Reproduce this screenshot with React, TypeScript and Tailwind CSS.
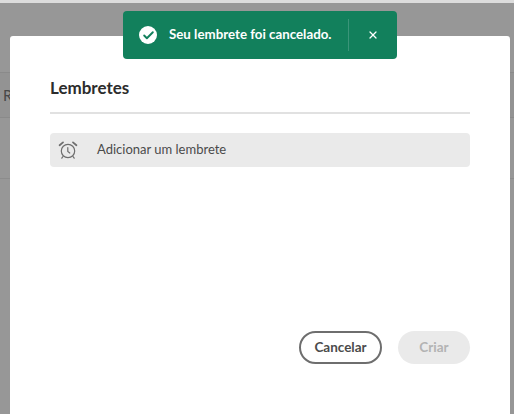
import { Check, X } from "lucide-react";

function ClockIcon() {
    return (
        <svg width="20" height="20" viewBox="0 0 20 20" fill="none" stroke="#6e6e6e" strokeWidth="1.2" strokeLinecap="round">
            <circle cx="10" cy="11" r="6.7" />
            <path d="M9.8 7.5v4l2 1.5" />
            <path d="M1.6 5.2 5 2.4" strokeWidth="1.8" />
            <path d="M18.4 5.2 15 2.4" strokeWidth="1.8" />
            <path d="M5 16.5 3.8 18.2M15 16.5l1.2 1.7" />
        </svg>
    );
}

export default function App() {
    return (
        <div className="relative h-[414px] w-[514px] overflow-hidden bg-[#979797] font-['Lato',sans-serif]">
            {/* page behind the dialog */}
            <div className="h-[3px] bg-[#dcdcdc]" />
            <div className="mt-[69px] flex h-[46px] items-center border-y border-[#8a8a8a] bg-[#939393] pl-[3px] text-[15px] text-[#474747]">R</div>
            <div className="mt-[60px] h-px bg-[#8c8c8c]" />

            <div className="absolute top-[36px] left-[10px] h-[378px] w-[500px] rounded-t-[3px] bg-white px-[40px] pt-[40px]">
                <h2 className="border-b-2 border-[#e1e1e1] pb-[12px] text-[17px] leading-[24px] font-bold text-[#2c2c2c]">Lembretes</h2>
                <div className="mt-[19px] flex h-[34px] items-center rounded-[4px] bg-[#eaeaea] pl-[8px] text-[13px] text-[#4b4b4b]">
                    <ClockIcon />
                    <span className="ml-[19px]">Adicionar um lembrete</span>
                </div>
                <div className="mt-[164px] flex justify-end gap-[16px]">
                    <button className="h-[33px] w-[83px] rounded-full border-2 border-[#6e6e6e] text-[13.5px] font-bold text-[#4b4b4b]">Cancelar</button>
                    <button className="h-[33px] w-[72px] rounded-full bg-[#eaeaea] text-[13.5px] font-bold text-[#b3b3b3]">Criar</button>
                </div>
            </div>

            <div className="absolute top-[11px] left-[123px] flex h-[48px] w-[274px] items-center rounded-[4px] bg-[#12805c] text-white">
                <span className="ml-[16px] flex h-[18px] w-[18px] items-center justify-center rounded-full bg-white">
                    <Check size={13} strokeWidth={3.5} color="#12805c" />
                </span>
                <span className="ml-[12px] w-[163px] text-[13.3px] font-bold whitespace-nowrap">Seu lembrete foi cancelado.</span>
                <span className="ml-[16px] h-[32px] w-px bg-[#3a9579]" />
                <X size={12} strokeWidth={2.5} className="ml-[18px]" />
            </div>
        </div>
    );
}
